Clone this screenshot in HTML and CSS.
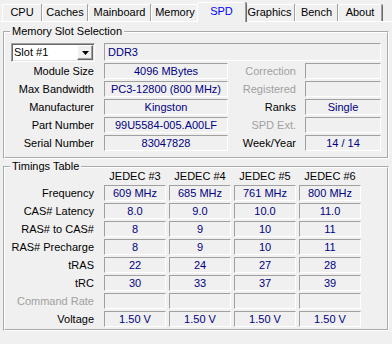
FILE: index.html
```html
<!DOCTYPE html>
<html lang="en">
<head>
    <meta charset="UTF-8">
    <title>CPU-Z SPD</title>
    <link rel="stylesheet" href="styles.css">
</head>
<body>
    <div class="tabs">
        <div class="tab tab-cpu">CPU</div>
        <div class="tab tab-caches">Caches</div>
        <div class="tab tab-mainboard">Mainboard</div>
        <div class="tab tab-memory">Memory</div>
        <div class="tab tab-spd active">SPD</div>
        <div class="tab tab-graphics">Graphics</div>
        <div class="tab tab-bench">Bench</div>
        <div class="tab tab-about">About</div>
    </div>

    <div class="page">
        <fieldset class="group group-slot">
            <legend>Memory Slot Selection</legend>
            <div class="slot-row">
                <div class="combo">
                    <span class="combo-text">Slot #1</span>
                    <span class="combo-btn">
                        <svg width="7" height="4" viewBox="0 0 7 4"><path d="M0 0H7L3.5 4Z" fill="#000"/></svg>
                    </span>
                </div>
                <div class="box box-left slot-type">DDR3</div>
            </div>
            <div class="info-grid">
                <div class="label">Module Size</div>
                <div class="box">4096 MBytes</div>
                <div class="label label-right off">Correction</div>
                <div class="box"></div>

                <div class="label">Max Bandwidth</div>
                <div class="box">PC3-12800 (800 MHz)</div>
                <div class="label label-right off">Registered</div>
                <div class="box"></div>

                <div class="label">Manufacturer</div>
                <div class="box">Kingston</div>
                <div class="label label-right">Ranks</div>
                <div class="box">Single</div>

                <div class="label">Part Number</div>
                <div class="box">99U5584-005.A00LF</div>
                <div class="label label-right off">SPD Ext.</div>
                <div class="box"></div>

                <div class="label">Serial Number</div>
                <div class="box">83047828</div>
                <div class="label label-right">Week/Year</div>
                <div class="box">14 / 14</div>
            </div>
        </fieldset>

        <fieldset class="group group-timings">
            <legend>Timings Table</legend>
            <div class="timing-grid">
                <div></div>
                <div class="head">JEDEC #3</div>
                <div class="head">JEDEC #4</div>
                <div class="head">JEDEC #5</div>
                <div class="head">JEDEC #6</div>

                <div class="label">Frequency</div>
                <div class="box">609 MHz</div>
                <div class="box">685 MHz</div>
                <div class="box">761 MHz</div>
                <div class="box">800 MHz</div>

                <div class="label">CAS# Latency</div>
                <div class="box">8.0</div>
                <div class="box">9.0</div>
                <div class="box">10.0</div>
                <div class="box">11.0</div>

                <div class="label">RAS# to CAS#</div>
                <div class="box">8</div>
                <div class="box">9</div>
                <div class="box">10</div>
                <div class="box">11</div>

                <div class="label">RAS# Precharge</div>
                <div class="box">8</div>
                <div class="box">9</div>
                <div class="box">10</div>
                <div class="box">11</div>

                <div class="label">tRAS</div>
                <div class="box">22</div>
                <div class="box">24</div>
                <div class="box">27</div>
                <div class="box">28</div>

                <div class="label">tRC</div>
                <div class="box">30</div>
                <div class="box">33</div>
                <div class="box">37</div>
                <div class="box">39</div>

                <div class="label off">Command Rate</div>
                <div class="box"></div>
                <div class="box"></div>
                <div class="box"></div>
                <div class="box"></div>

                <div class="label">Voltage</div>
                <div class="box">1.50 V</div>
                <div class="box">1.50 V</div>
                <div class="box">1.50 V</div>
                <div class="box">1.50 V</div>
            </div>
        </fieldset>
    </div>
</body>
</html>
```

FILE: styles.css
```css
html, body {
    margin: 0;
    height: 100%;
    overflow: hidden;
}
body {
    background-color: #f0f0f0;
    font-family: "Liberation Sans", Arial, sans-serif;
    font-size: 11px;
    color: #000;
}

/* tab strip */
.tabs {
    display: flex;
    align-items: flex-end;
    height: 21px;
    padding-left: 2px;
}
.tab {
    position: relative;
    box-sizing: border-box;
    height: 17px;
    line-height: 15px;
    text-align: center;
    border-top: 1px solid #fff;
    border-left: 1px solid #fff;
    border-right: 1px solid #a0a0a0;
    border-radius: 2px 2px 0 0;
    box-shadow: 1px 0 0 #696969;
}
.tab.active {
    height: 20px;
    line-height: 16px;
    margin: 0 -2px -1px;
    z-index: 1;
    color: #0000ff;
    background-color: #f0f0f0;
}
.tab-cpu { width: 40px; }
.tab-caches { width: 46px; }
.tab-mainboard { width: 63px; }
.tab-memory { width: 48px; }
.tab-spd { width: 49px; }
.tab-graphics { width: 51px; }
.tab-bench { width: 43px; }
.tab-about { width: 44px; }

.page {
    border-top: 1px solid #fff;
}

/* group boxes */
.group {
    box-sizing: border-box;
    width: 386px;
    margin: 3px 0 0 3px;
    padding: 5px 0 6px;
    border: 2px groove #fff;
    min-width: 0;
}
.group legend {
    margin-left: 5px;
    padding: 0 2px;
    line-height: 13px;
}
.group-timings {
    margin-top: 1px;
    padding-bottom: 2px;
}

/* sunken value fields */
.box {
    box-sizing: border-box;
    height: 16px;
    line-height: 14px;
    text-align: center;
    white-space: nowrap;
    overflow: hidden;
    color: #000080;
    border-top: 1px solid #a0a0a0;
    border-left: 1px solid #a0a0a0;
    border-right: 1px solid #fff;
    border-bottom: 1px solid #fff;
}
.box-left {
    text-align: left;
    padding-left: 3px;
}

.label {
    text-align: right;
    padding-right: 7px;
    line-height: 16px;
    white-space: nowrap;
}
.label-right {
    padding-right: 6px;
}
.off {
    color: #a0a0a0;
}

/* slot selector row */
.slot-row {
    display: flex;
    height: 19px;
}
.combo {
    box-sizing: border-box;
    display: flex;
    align-items: center;
    justify-content: space-between;
    width: 84px;
    height: 19px;
    margin-left: 6px;
    background-color: #fff;
    border: 1px solid;
    border-color: #a0a0a0 #fff #fff #a0a0a0;
    box-shadow: inset 1px 1px 0 #696969, inset -1px -1px 0 #e3e3e3;
}
.combo-text {
    padding-left: 2px;
    line-height: 15px;
}
.combo-btn {
    box-sizing: border-box;
    display: flex;
    align-items: center;
    justify-content: center;
    width: 16px;
    height: 15px;
    margin-right: 1px;
    background-color: #f0f0f0;
    border: 1px solid;
    border-color: #fff #696969 #696969 #fff;
    box-shadow: inset -1px -1px 0 #a0a0a0;
}
.slot-type {
    width: 277px;
    height: 18px;
    line-height: 16px;
    margin-left: 9px;
}

.info-grid {
    display: grid;
    grid-template-columns: 96px 124px 71px 76px;
    grid-auto-rows: 16px;
    column-gap: 3px;
    row-gap: 2px;
    margin-top: 1px;
}

.timing-grid {
    display: grid;
    grid-template-columns: 96px 62px 62px 62px 62px;
    grid-template-rows: 14px;
    grid-auto-rows: 16px;
    column-gap: 3px;
    row-gap: 2px;
    margin-top: -9px;
}
.head {
    text-align: center;
    line-height: 14px;
    white-space: nowrap;
}
```
